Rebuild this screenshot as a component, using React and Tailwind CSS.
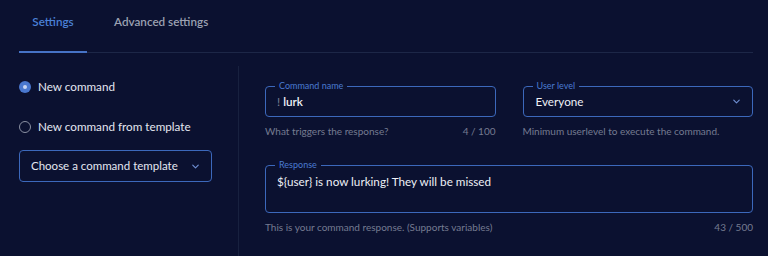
import { ChevronDown } from 'lucide-react';

const Radio = ({ checked, label }) => (
  <label className="flex items-center gap-[7px] text-[11.7px] leading-[15px] text-[#e4e7f0]">
    {checked ? (
      <span className="flex h-[12px] w-[12px] items-center justify-center rounded-full bg-[#4a78cf]">
        <span className="h-[4px] w-[4px] rounded-full bg-[#c9d6f2]" />
      </span>
    ) : (
      <span className="h-[12px] w-[12px] rounded-full border-[1.5px] border-[#8a90a2]" />
    )}
    {label}
  </label>
);

// outlined field with the label sitting on the top border
const Field = ({ label, height, children }) => (
  <div className={`relative rounded-[4px] border border-[#3c68bb] ${height}`}>
    <span className="absolute -top-[6px] left-[9px] bg-[#0b1130] px-[4px] text-[9px] leading-[10px] text-[#4a7bd0]">
      {label}
    </span>
    {children}
  </div>
);

const Helper = ({ text, count }) => (
  <div className="mt-[8px] flex justify-between text-[10px] leading-[12px] text-[#757b90]">
    <span>{text}</span>
    {count && <span>{count}</span>}
  </div>
);

export default function App() {
  return (
    <div className="h-[256px] w-[768px] overflow-hidden bg-[#0b1130] pl-[19px] pr-[15px] font-['Lato',sans-serif]">
      {/* tabs */}
      <div className="flex h-[53px] border-b border-[#1d2747]">
        <div className="relative flex w-[68px] justify-center pt-[13px] text-[11.7px] font-semibold text-[#4a80d6]">
          Settings
          <span className="absolute -bottom-[1px] left-0 h-[2px] w-full bg-[#4673c6]" />
        </div>
        <div className="ml-[27px] pt-[13px] text-[11.7px] font-semibold text-[#9ca1b2]">
          Advanced settings
        </div>
      </div>

      <div className="mt-[13px] flex h-[190px]">
        {/* left column */}
        <div className="w-[220px] border-r border-[#18213f] pt-[13px]">
          <div className="flex flex-col gap-[25px]">
            <Radio checked label="New command" />
            <Radio label="New command from template" />
          </div>
          <button className="mt-[16px] flex h-[32px] w-[193px] items-center justify-between whitespace-nowrap rounded-[4px] border border-[#3c68bb] pl-[11px] pr-[10px] text-left text-[11.5px] text-[#e4e7f0]">
            Choose a command template
            <ChevronDown size={11} strokeWidth={2.5} className="text-[#6f8fd2]" />
          </button>
        </div>

        {/* right column */}
        <div className="flex-1 pl-[26px] pt-[20px]">
          <div className="grid grid-cols-2 gap-[27px]">
            <div>
              <Field label="Command name" height="h-[31px]">
                <div className="flex h-full items-center pl-[11px] text-[11.7px]">
                  <span className="mr-[3px] text-[#7a8095]">!</span>
                  <span className="font-semibold text-[#eef0f6]">lurk</span>
                </div>
              </Field>
              <Helper text="What triggers the response?" count="4 / 100" />
            </div>
            <div>
              <Field label="User level" height="h-[31px]">
                <div className="flex h-full items-center justify-between pl-[12px] pr-[10px] text-[11.7px] text-[#eef0f6]">
                  Everyone
                  <ChevronDown size={11} strokeWidth={2.5} className="text-[#6f8fd2]" />
                </div>
              </Field>
              <Helper text="Minimum userlevel to execute the command." />
            </div>
          </div>

          <div className="mt-[28px]">
            <Field label="Response" height="h-[48px]">
              <div className="pl-[11px] pt-[7px] text-[11.7px] text-[#eef0f6]">
                {'${user} is now lurking! They will be missed'}
              </div>
            </Field>
            <Helper text="This is your command response. (Supports variables)" count="43 / 500" />
          </div>
        </div>
      </div>
    </div>
  );
}
